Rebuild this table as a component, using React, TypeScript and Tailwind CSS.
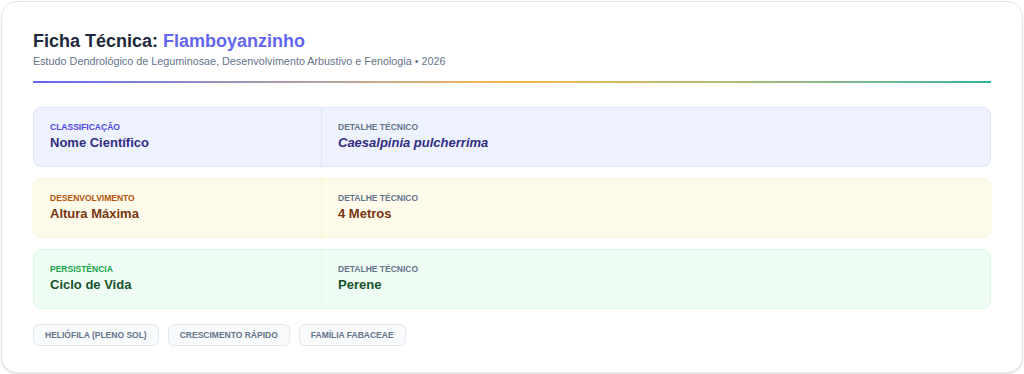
const rows = [
  {
    group: "Classificação",
    name: "Nome Científico",
    detail: "Caesalpinia pulcherrima",
    italic: true,
    box: "bg-[#eef2ff] border-[#dfe3f8]",
    divider: "border-[#dfe3f8]",
    label: "text-[#4f46e5]",
    value: "text-[#312e81]",
  },
  {
    group: "Desenvolvimento",
    name: "Altura Máxima",
    detail: "4 Metros",
    italic: false,
    box: "bg-[#fffbeb] border-[#fdf3d3]",
    divider: "border-[#fbf1d5]",
    label: "text-[#b45309]",
    value: "text-[#78350f]",
  },
  {
    group: "Persistência",
    name: "Ciclo de Vida",
    detail: "Perene",
    italic: false,
    box: "bg-[#f0fdf4] border-[#dcf7e6]",
    divider: "border-[#e3f7ea]",
    label: "text-[#16a34a]",
    value: "text-[#14532d]",
  },
];

const tags = ["Heliófila (Pleno Sol)", "Crescimento Rápido", "Família Fabaceae"];

export default function App() {
  return (
    <div className="w-[1024px] h-[374px] bg-white p-px font-['Liberation_Sans',Arial,sans-serif]">
      <div className="h-full rounded-2xl border border-[#e5e7eb] bg-white px-[31px] pt-[27px] shadow-sm">
        <h1 className="text-[18px] leading-6 font-bold text-[#1e293b]">
          Ficha Técnica: <span className="text-[#6366f1]">Flamboyanzinho</span>
        </h1>
        <p className="text-[10.8px] leading-4 text-[#64748b]">
          Estudo Dendrológico de Leguminosae, Desenvolvimento Arbustivo e Fenologia • 2026
        </p>
        <div className="mt-3 h-[2px] bg-gradient-to-r from-[#6366f1] via-[#f5b83d] to-[#2bb3a0]" />

        <div className="mt-6 flex flex-col gap-[11px]">
          {rows.map((r) => (
            <div key={r.group} className={`flex h-[60px] rounded-lg border ${r.box}`}>
              <div className={`w-[288px] border-r px-4 py-[13px] ${r.divider}`}>
                <div className={`text-[8.5px] leading-3 font-bold uppercase ${r.label}`}>{r.group}</div>
                <div className={`text-[13px] leading-5 font-bold ${r.value}`}>{r.name}</div>
              </div>
              <div className="flex-1 px-4 py-[13px]">
                <div className="text-[8.5px] leading-3 font-bold uppercase text-[#64748b]">Detalhe Técnico</div>
                <div className={`text-[13px] leading-5 font-bold ${r.value} ${r.italic ? "italic" : ""}`}>
                  {r.detail}
                </div>
              </div>
            </div>
          ))}
        </div>

        <div className="mt-[15px] flex gap-[9px]">
          {tags.map((t) => (
            <span
              key={t}
              className="rounded-md border border-[#e2e8f0] bg-[#f8fafc] px-[11px] py-1 text-[8.5px] leading-3 font-bold uppercase text-[#64748b]"
            >
              {t}
            </span>
          ))}
        </div>
      </div>
    </div>
  );
}
